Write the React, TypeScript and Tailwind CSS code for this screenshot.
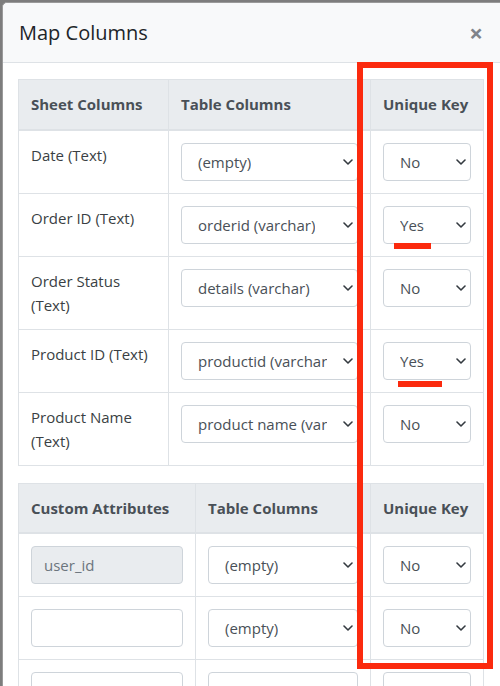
import React from "react";

function Chevron() {
  return (
    <svg width="10" height="6" viewBox="0 0 10 6" className="shrink-0">
      <path d="M1 1l4 4 4-4" fill="none" stroke="#343a40" strokeWidth="1.6" strokeLinecap="round" strokeLinejoin="round" />
    </svg>
  );
}

function Select({ value }: { value: string }) {
  return (
    <div className="relative flex h-[38px] w-full items-center rounded-[4px] border border-[#ced4da] bg-white pl-4 pr-[30px] text-[15px] text-[#495057]">
      <span className="overflow-hidden whitespace-nowrap">{value}</span>
      <span className="absolute right-[4px] top-1/2 -translate-y-1/2 flex">
        <Chevron />
      </span>
    </div>
  );
}

function Input({ value, disabled }: { value?: string; disabled?: boolean }) {
  return (
    <div
      className={`flex h-[38px] w-full items-center rounded-[4px] border border-[#ced4da] px-3 text-[15px] text-[#6c757d] ${
        disabled ? "bg-[#e9ecef]" : "bg-white"
      }`}
    >
      {value}
    </div>
  );
}

const th = "border border-[#dee2e6] border-b-2 bg-[#e9ecef] px-3 py-3 text-left align-middle font-bold text-[15px] leading-6 text-[#495057]";
const td = "border border-[#dee2e6] px-3 py-3 align-top text-[15px] leading-6 text-[#3a3f44]";

const rows1 = [
  ["Date (Text)", "(empty)", "No"],
  ["Order ID (Text)", "orderid (varchar)", "Yes"],
  ["Order Status (Text)", "details (varchar)", "No"],
  ["Product ID (Text)", "productid (varchar)", "Yes"],
  ["Product Name (Text)", "product name (varchar)", "No"],
];

function EmptySelect() {
  return <div className="h-[38px] w-full rounded-[4px] border border-[#ced4da] bg-white" />;
}

export default function App() {
  return (
    <div className="relative h-[686px] w-[500px] overflow-hidden bg-[#7d7d7d] font-['Open_Sans',sans-serif]">
      <div className="ml-[2px] mt-[2px] w-[520px] rounded-[5px] border border-[#9a9a9a] bg-white">
        <div className="flex h-[60px] items-center justify-between rounded-t-[5px] border-b border-[#dee2e6] bg-[#f8f9fa] pl-4 pr-[38px]">
          <h5 className="text-[20px] leading-7 text-[#212529]">Map Columns</h5>
          <span className="text-[24px] font-bold leading-none text-[#80848a]">×</span>
        </div>
        <div className="px-[15px] pt-4">
          <table className="mb-[17px] w-[465px] table-fixed border-collapse">
            <colgroup>
              <col className="w-[150px]" />
              <col className="w-[202px]" />
              <col className="w-[113px]" />
            </colgroup>
            <thead>
              <tr className="h-[50px]">
                <th className={th}>Sheet Columns</th>
                <th className={th}>Table Columns</th>
                <th className={th}>Unique Key</th>
              </tr>
            </thead>
            <tbody>
              {rows1.map((r) => (
                <tr key={r[0]} className="h-[63px]">
                  <td className={td}>{r[0]}</td>
                  <td className={td}>
                    <Select value={r[1]} />
                  </td>
                  <td className={td}>
                    <Select value={r[2]} />
                  </td>
                </tr>
              ))}
            </tbody>
          </table>
          <table className="w-[465px] table-fixed border-collapse">
            <colgroup>
              <col className="w-[177px]" />
              <col className="w-[175px]" />
              <col className="w-[113px]" />
            </colgroup>
            <thead>
              <tr className="h-[49px]">
                <th className={th}>Custom Attributes</th>
                <th className={th}>Table Columns</th>
                <th className={th}>Unique Key</th>
              </tr>
            </thead>
            <tbody>
              <tr className="h-[64px]">
                <td className={td}>
                  <Input value="user_id" disabled />
                </td>
                <td className={td}>
                  <Select value="(empty)" />
                </td>
                <td className={td}>
                  <Select value="No" />
                </td>
              </tr>
              <tr className="h-[63px]">
                <td className={td}>
                  <Input />
                </td>
                <td className={td}>
                  <Select value="(empty)" />
                </td>
                <td className={td}>
                  <Select value="No" />
                </td>
              </tr>
              <tr className="h-[63px]">
                <td className={td}>
                  <Input />
                </td>
                <td className={td}>
                  <EmptySelect />
                </td>
                <td className={td}>
                  <EmptySelect />
                </td>
              </tr>
            </tbody>
          </table>
        </div>
      </div>

      {/* annotations */}
      <div className="absolute left-[357px] top-[62px] h-[607px] w-[136px] border-[6px] border-[#fb2a0e]" />
      <div className="absolute left-[394px] top-[243px] h-[6px] w-[37px] bg-[#fb2a0e]" />
      <div className="absolute left-[398px] top-[381px] h-[6px] w-[44px] bg-[#fb2a0e]" />
    </div>
  );
}
